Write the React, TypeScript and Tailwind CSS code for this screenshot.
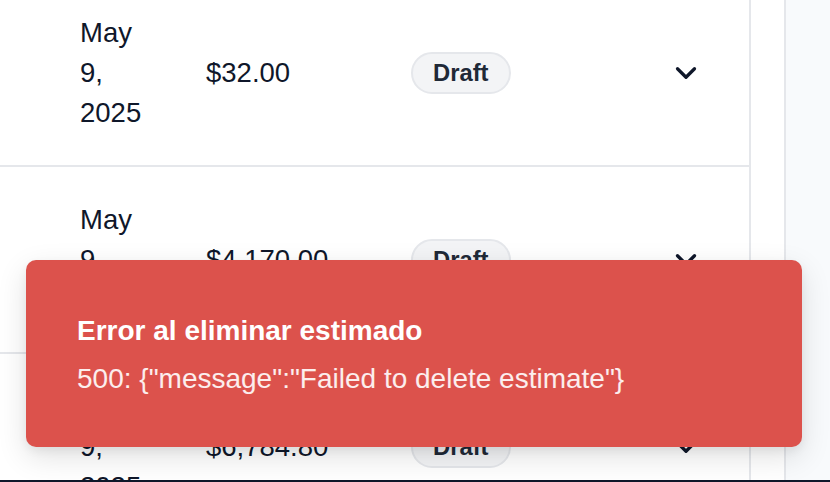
import React from "react";
import { ChevronDown } from "lucide-react";

type Row = { date: string; amount: string };

const rows: Row[] = [
  { date: "May 9, 2025", amount: "$32.00" },
  { date: "May 9, 2025", amount: "$4,170.00" },
  { date: "May 9, 2025", amount: "$6,784.80" },
];

function TableRow({ row }: { row: Row }) {
  return (
    <div className="flex items-center h-[187px] border-b-2 border-[#e5e7eb] shrink-0">
      <div className="w-[206px] pl-[80px] shrink-0">
        <div className="w-[70px] text-[27.5px] leading-[40px] text-[#0f172a]">{row.date}</div>
      </div>
      <div className="w-[205px] shrink-0 text-[27.5px] leading-[40px] text-[#0f172a]">{row.amount}</div>
      <div className="w-[230px] shrink-0">
        <span className="inline-flex items-center h-[42px] px-[20px] rounded-full border-2 border-[#e5e7eb] bg-[#f3f4f6] text-[23.8px] font-bold text-[#1f2937]">
          Draft
        </span>
      </div>
      <div className="w-[90px] flex justify-center">
        <ChevronDown size={34} strokeWidth={2.3} className="text-[#0f172a]" />
      </div>
    </div>
  );
}

export default function App() {
  return (
    <div className="w-[830px] h-[482px] overflow-hidden relative bg-white font-['Liberation_Sans',Arial,sans-serif] flex flex-col">
      <div className="flex h-[480px] shrink-0">
        <div className="w-[784px] shrink-0 bg-white">
          <div className="w-[751px] h-full border-r-2 border-[#e5e7eb] flex flex-col overflow-hidden">
            <div className="mt-[-20px] flex flex-col">
              {rows.map((r, i) => (
                <TableRow key={i} row={r} />
              ))}
            </div>
          </div>
        </div>
        <div className="flex-1 border-l-2 border-[#e5e7eb] bg-[#f8fafc]" />
      </div>
      <div className="h-[2px] bg-[#0f172a] shrink-0" />

      <div className="absolute left-[26px] top-[260px] w-[776px] h-[187px] rounded-[10px] bg-[#dc524c] shadow-[0_10px_30px_rgba(0,0,0,0.12),0_4px_10px_rgba(0,0,0,0.06)] pl-[51px] pt-[51px] flex flex-col gap-[8px]">
        <div className="text-[28px] leading-[40px] font-bold text-white">Error al eliminar estimado</div>
        <div className="text-[28px] leading-[40px] text-white/90">
          500: {"{\"message\":\"Failed to delete estimate\"}"}
        </div>
      </div>
    </div>
  );
}
